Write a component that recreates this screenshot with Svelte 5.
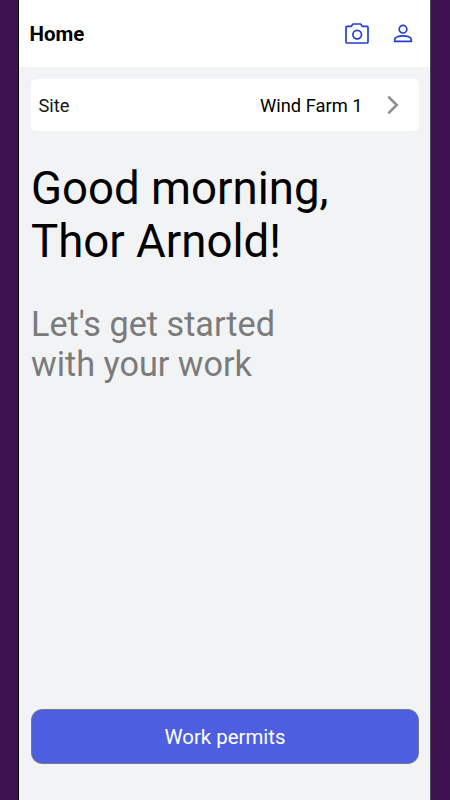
<script>
	let user = { name: 'Thor Arnold' }
	let site = 'Wind Farm 1'
</script>

<div class="backdrop">
	<div class="screen">
		<header>
			<h1>Home</h1>
			<div class="actions">
				<button class="icon" aria-label="Camera">
					<svg width="24" height="22" viewBox="0 0 24 22">
						<path d="M2 3.4H6.1L8.1 1H15.5L17.5 3.4H22Q23 3.4 23 4.4V19Q23 20 22 20H2Q1 20 1 19V4.4Q1 3.4 2 3.4Z" />
						<circle cx="12.2" cy="11.6" r="4.3" />
					</svg>
				</button>
				<button class="icon" aria-label="Profile">
					<svg width="20" height="20" viewBox="0 0 20 20">
						<circle cx="10" cy="5.2" r="3.8" />
						<path d="M1.7 17.4V15.5C1.7 13.2 5.8 11.8 10 11.8S18.3 13.2 18.3 15.5V17.4Z" />
					</svg>
				</button>
			</div>
		</header>
		<main>
			<button class="site">
				<span class="label">Site</span>
				<span class="value">{site}</span>
				<svg width="12" height="20" viewBox="0 0 12 20">
					<path d="M1.3 1.7L9.7 10L1.3 18.3" />
				</svg>
			</button>
			<h2>Good morning,<br />{user.name}!</h2>
			<p>Let's get started<br />with your work</p>
			<button class="permits">Work permits</button>
		</main>
	</div>
</div>

<style>
	:global(body) {
		margin: 0;
	}
	.backdrop {
		display: flex;
		box-sizing: border-box;
		height: 800px;
		padding: 0 19px 0 18px;
		background: #3e1150;
		font-family: Roboto, sans-serif;
	}
	.screen {
		display: flex;
		flex-direction: column;
		flex: 1;
		border-left: 1px solid #000;
		border-right: 1px solid #50465c;
		background: #f2f3f5;
	}
	header {
		display: flex;
		align-items: center;
		justify-content: space-between;
		box-sizing: border-box;
		height: 67px;
		padding: 0 17px 0 10.5px;
		background: #fff;
	}
	h1 {
		margin: 1px 0 0;
		font-size: 20.5px;
		font-weight: 700;
		line-height: 24px;
		color: #000;
	}
	button {
		margin: 0;
		border: 0;
		font-family: inherit;
	}
	.actions {
		display: flex;
		align-items: center;
		gap: 24px;
	}
	.icon {
		display: flex;
		padding: 0;
		background: none;
	}
	.icon svg {
		fill: none;
		stroke: #2440cf;
		stroke-width: 1.7;
	}
	main {
		display: flex;
		flex-direction: column;
		flex: 1;
		padding: 12px 11px 36px 12px;
	}
	.site {
		display: flex;
		align-items: center;
		height: 52px;
		padding: 0 20.5px 0 7.5px;
		border-radius: 5px;
		background: #fff;
		font-size: 18.3px;
		color: #000;
	}
	.label {
		color: #151515;
	}
	.value {
		margin-left: auto;
		margin-right: 24px;
	}
	.site svg {
		fill: none;
		stroke: #8e8e8e;
		stroke-width: 2.6;
	}
	h2 {
		margin: 31px 0 0;
		font-size: 45.6px;
		font-weight: 400;
		line-height: 53px;
		color: #000;
	}
	p {
		margin: 36px 0 0;
		font-size: 34.2px;
		line-height: 40px;
		color: #7b7b7b;
	}
	.permits {
		height: 55px;
		margin-top: auto;
		border: 1px solid #77798a;
		border-radius: 11px;
		background: #4d5fe0;
		font-size: 20.4px;
		color: #fff;
	}
</style>
